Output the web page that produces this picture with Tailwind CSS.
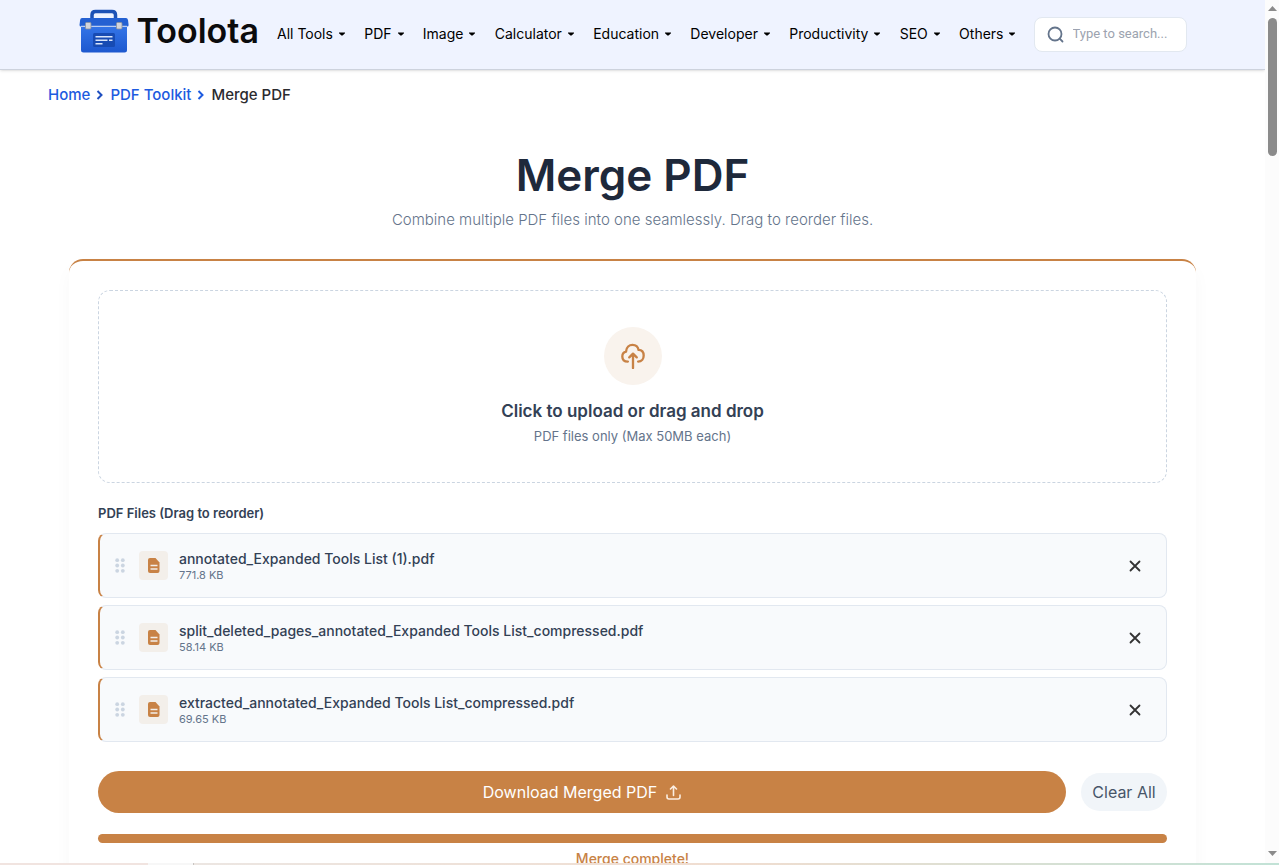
<!DOCTYPE html>
<html lang="en">
<head>
<meta charset="utf-8">
<meta name="viewport" content="width=device-width, initial-scale=1">
<title>Merge PDF - Toolota</title>
<script src="https://cdn.jsdelivr.net/npm/@tailwindcss/browser@4"></script>
</head>
<body class="flex h-screen flex-col overflow-hidden bg-white font-['Inter',sans-serif] text-[#1e293b]">
<svg class="hidden" aria-hidden="true">
  <symbol id="caret" viewBox="0 0 6 4"><path d="M0 .5h6v.8L3.6 3.5H2.400L0 1.300z" fill="currentColor"/></symbol>
  <symbol id="chevron" viewBox="0 0 8 10"><path d="M1.500 1l4 4-4 4" fill="none" stroke="currentColor" stroke-width="2"/></symbol>
  <symbol id="grip" viewBox="0 0 10 15"><g fill="#cbd5e1"><circle cx="2.200" cy="2.200" r="1.900"/><circle cx="7.800" cy="2.200" r="1.900"/><circle cx="2.200" cy="7.500" r="1.900"/><circle cx="7.800" cy="7.500" r="1.900"/><circle cx="2.200" cy="12.800" r="1.900"/><circle cx="7.800" cy="12.800" r="1.900"/></g></symbol>
  <symbol id="doc" viewBox="0 0 12 15"><path d="M2 0h5.500L11.500 4.500V13a2 2 0 0 1-2 2H2a2 2 0 0 1-2-2V2a2 2 0 0 1 2-2z" fill="#c88245"/><path d="M2.500 7.500h7M2.500 11h7" stroke="#f2eee9" stroke-width="1.500"/></symbol>
  <symbol id="cross" viewBox="0 0 12 12"><path d="M1.500 1.500l9 9M10.500 1.500l-9 9" fill="none" stroke="#333" stroke-width="1.800" stroke-linecap="round"/></symbol>
</svg>
<div class="flex min-h-0 flex-1">
  <div class="min-w-0 flex-1 overflow-hidden">
    <header class="h-[70px] border-b border-[#cdd2dd] bg-[#eff3ff] shadow-sm">
      <div class="mx-auto flex h-[68px] max-w-[1108px] items-center">
        <a href="#" class="mr-[18px] flex items-center gap-2 pb-[6px] text-[#0b0b0d]">
          <svg class="h-[44px] w-[50px]" viewBox="0 0 50 44" aria-hidden="true">
            <defs><linearGradient id="box" x1="0" y1="0" x2="0" y2="1"><stop offset="0" stop-color="#3475e8"/><stop offset="1" stop-color="#1d58cf"/></linearGradient></defs>
            <path d="M13 10V6q0-3.500 3.500-3.500h16.500Q36.500 2.500 36.500 6v4" fill="none" stroke="#1d52b6" stroke-width="3.500"/>
            <path d="M2 17h46v24q0 2.500-2.500 2.500h-41Q2 43.500 2 41z" fill="url(#box)"/>
            <path d="M3 9h44q1.500 0 2 2l.6 5q0 1.500-1.500 1.500H2q-1.500 0-1.500-1.500l.6-5Q1.500 9 3 9z" fill="#2460d2"/>
            <path d="M2 17.300h46" stroke="#b9cdf3" stroke-width="1.200"/>
            <rect x="14" y="24" width="22" height="14" rx="1.500" fill="#174bb3"/>
            <path d="M16.500 27.800h17M16.500 31.300h12M30 31.300h3.500M16.500 34.800h7" stroke="#d9e6fb" stroke-width="1.500"/>
            <g fill="#d3d5da" stroke="#8a909c" stroke-width=".8"><rect x="6.500" y="13.500" width="5.500" height="6.500" rx="1"/><rect x="37.500" y="13.500" width="5.500" height="6.500" rx="1"/></g>
          </svg>
          <span class="text-[34px] leading-10 font-semibold">Toolota</span>
        </a>
        <nav class="flex flex-1 justify-between text-sm text-black">
          <a href="#" class="flex items-center gap-[6px]">All Tools <svg class="h-1 w-[6px]"><use href="#caret"/></svg></a>
          <a href="#" class="flex items-center gap-[6px]">PDF <svg class="h-1 w-[6px]"><use href="#caret"/></svg></a>
          <a href="#" class="flex items-center gap-[6px]">Image <svg class="h-1 w-[6px]"><use href="#caret"/></svg></a>
          <a href="#" class="flex items-center gap-[6px]">Calculator <svg class="h-1 w-[6px]"><use href="#caret"/></svg></a>
          <a href="#" class="flex items-center gap-[6px]">Education <svg class="h-1 w-[6px]"><use href="#caret"/></svg></a>
          <a href="#" class="flex items-center gap-[6px]">Developer <svg class="h-1 w-[6px]"><use href="#caret"/></svg></a>
          <a href="#" class="flex items-center gap-[6px]">Productivity <svg class="h-1 w-[6px]"><use href="#caret"/></svg></a>
          <a href="#" class="flex items-center gap-[6px]">SEO <svg class="h-1 w-[6px]"><use href="#caret"/></svg></a>
          <a href="#" class="flex items-center gap-[6px]">Others <svg class="h-1 w-[6px]"><use href="#caret"/></svg></a>
        </nav>
        <label class="ml-[18px] flex h-[35px] w-[153px] items-center gap-[9px] rounded-lg border border-[#e2e8f0] bg-white px-3">
          <svg class="size-[17px] shrink-0" viewBox="0 0 17 17" fill="none" stroke="#64748b" stroke-width="1.800" stroke-linecap="round" aria-hidden="true"><circle cx="8" cy="8" r="6.500"/><path d="M12.700 12.700l2.800 2.800"/></svg>
          <input type="text" aria-label="Search tools" placeholder="Type to search..." class="w-full min-w-0 font-['Roboto',sans-serif] text-[13px] outline-none placeholder:text-[#9ca3af]">
        </label>
      </div>
    </header>

    <nav aria-label="Breadcrumb" class="flex h-[50px] items-center gap-[6px] px-12 text-[15px] font-medium text-[#1d5be0]">
      <a href="#">Home</a><svg class="h-[10px] w-2 text-[#1e4fc0]"><use href="#chevron"/></svg>
      <a href="#">PDF Toolkit</a><svg class="h-[10px] w-2"><use href="#chevron"/></svg>
      <span class="text-[#2b2b2f]">Merge PDF</span>
    </nav>

    <main class="px-[69px]">
      <h1 class="pt-7 text-center text-[44px] leading-[54px] font-semibold">Merge PDF</h1>
      <p class="mt-[6px] text-center text-[15px] leading-6 font-light text-[#64748b]">Combine multiple PDF files into one seamlessly. Drag to reorder files.</p>

      <section class="mt-[27px] rounded-[14px] border-t-2 border-[#c88245] bg-white p-[29px] shadow-[0_9px_18px_rgba(0,0,0,0.03)]">
        <button type="button" class="flex h-[193px] w-full flex-col items-center rounded-xl border border-dashed border-[#cbd5e1] pt-9">
          <span class="flex size-[58px] items-center justify-center rounded-full bg-[#f9f3ed]">
            <svg class="size-[26px]" viewBox="0 0 26 28" fill="none" stroke="#c88245" stroke-width="2.500" stroke-linecap="round" stroke-linejoin="round" aria-hidden="true"><path d="M7.500 20C3.500 20 1.500 17.500 1.500 14.500c0-2.700 1.600-4.600 4-5.200C5.800 4.500 9 2 12.500 2c3.400 0 5.900 2.300 6.500 5.500 3.500.2 5.500 2.700 5.500 6 0 3.400-2 6.500-6 6.500"/><path d="M13 27V12M9 15.500l4-4 4 4"/></svg>
          </span>
          <span class="mt-[14px] text-[17px] leading-6 font-semibold text-[#334155]">Click to upload or drag and drop</span>
          <span class="mt-[3px] text-[13px] leading-5 text-[#64748b]">PDF files only (Max 50MB each)</span>
        </button>

        <h2 class="mt-5 text-[13px] leading-5 font-semibold text-[#334155]">PDF Files (Drag to reorder)</h2>
        <ul class="mt-[10px] flex flex-col gap-[7px]">
          <li class="flex h-[65px] items-center rounded-lg border border-l-2 border-[#e2e8f0] border-l-[#c88245] bg-[#f8fafc] pr-[25px] pl-[15px]">
            <svg class="h-[15px] w-[10px]" aria-hidden="true"><use href="#grip"/></svg>
            <span class="ml-[14px] flex size-[29px] items-center justify-center rounded-sm bg-[#f3efea]"><svg class="h-[15px] w-3" aria-hidden="true"><use href="#doc"/></svg></span>
            <div class="ml-[11px] flex-1"><p class="text-sm leading-[18px] font-medium text-[#334155]">annotated_Expanded Tools List (1).pdf</p><p class="text-[11px] leading-[14px] text-[#64748b]">771.8 KB</p></div>
            <button type="button" aria-label="Remove annotated_Expanded Tools List (1).pdf"><svg class="size-3"><use href="#cross"/></svg></button>
          </li>
          <li class="flex h-[65px] items-center rounded-lg border border-l-2 border-[#e2e8f0] border-l-[#c88245] bg-[#f8fafc] pr-[25px] pl-[15px]">
            <svg class="h-[15px] w-[10px]" aria-hidden="true"><use href="#grip"/></svg>
            <span class="ml-[14px] flex size-[29px] items-center justify-center rounded-sm bg-[#f3efea]"><svg class="h-[15px] w-3" aria-hidden="true"><use href="#doc"/></svg></span>
            <div class="ml-[11px] flex-1"><p class="text-sm leading-[18px] font-medium text-[#334155]">split_deleted_pages_annotated_Expanded Tools List_compressed.pdf</p><p class="text-[11px] leading-[14px] text-[#64748b]">58.14 KB</p></div>
            <button type="button" aria-label="Remove split_deleted_pages_annotated_Expanded Tools List_compressed.pdf"><svg class="size-3"><use href="#cross"/></svg></button>
          </li>
          <li class="flex h-[65px] items-center rounded-lg border border-l-2 border-[#e2e8f0] border-l-[#c88245] bg-[#f8fafc] pr-[25px] pl-[15px]">
            <svg class="h-[15px] w-[10px]" aria-hidden="true"><use href="#grip"/></svg>
            <span class="ml-[14px] flex size-[29px] items-center justify-center rounded-sm bg-[#f3efea]"><svg class="h-[15px] w-3" aria-hidden="true"><use href="#doc"/></svg></span>
            <div class="ml-[11px] flex-1"><p class="text-sm leading-[18px] font-medium text-[#334155]">extracted_annotated_Expanded Tools List_compressed.pdf</p><p class="text-[11px] leading-[14px] text-[#64748b]">69.65 KB</p></div>
            <button type="button" aria-label="Remove extracted_annotated_Expanded Tools List_compressed.pdf"><svg class="size-3"><use href="#cross"/></svg></button>
          </li>
        </ul>

        <div class="mt-[29px] flex items-center gap-[15px]">
          <button type="button" class="flex h-[42px] flex-1 items-center justify-center gap-[9px] rounded-full bg-[#c88245] text-base text-white">Download Merged PDF
            <svg class="size-[15px]" viewBox="0 0 15 15" fill="none" stroke="#fbeee2" stroke-width="1.600" stroke-linecap="round" stroke-linejoin="round" aria-hidden="true"><path d="M7.500 10.500V1.200M4.500 4l3-3 3 3M1 10v2q0 2 2 2h9q2 0 2-2v-2"/></svg>
          </button>
          <button type="button" class="h-[38px] w-[86px] rounded-full bg-[#f1f5f9] text-base text-[#475569]">Clear All</button>
        </div>
        <div role="progressbar" aria-label="Merge progress" aria-valuenow="100" class="mt-[21px] h-[9px] rounded-full bg-[#c88245]"></div>
        <p class="mt-[6px] text-center text-sm leading-5 font-medium text-[#c88245]">Merge complete!</p>
      </section>
    </main>
  </div>
  <div class="flex w-[14px] shrink-0 flex-col items-center bg-[#fcfcfc]" aria-hidden="true">
    <svg class="mt-[6px] h-[5px] w-[9px]" viewBox="0 0 9 5"><path d="M4.500 0L9 5H0z" fill="#8b8b8b"/></svg>
    <div class="mt-[7px] h-[138px] w-[9px] rounded-full bg-[#8b8b8b]"></div>
    <svg class="mt-auto mb-[7px] h-[5px] w-[9px]" viewBox="0 0 9 5"><path d="M0 0h9L4.500 5z" fill="#8b8b8b"/></svg>
  </div>
</div>
<div class="flex h-[2px] shrink-0" aria-hidden="true">
  <div class="w-[148px] bg-[#f1e4e0]"></div><div class="w-[45px] bg-[#f7f7f7]"></div><div class="w-px bg-[#c9c5c2]"></div>
  <div class="flex-1 bg-linear-to-r from-[#ece6e2] via-[#f0ddd0] via-50% to-[#c2e2d6]"></div>
</div>
</body>
</html>
